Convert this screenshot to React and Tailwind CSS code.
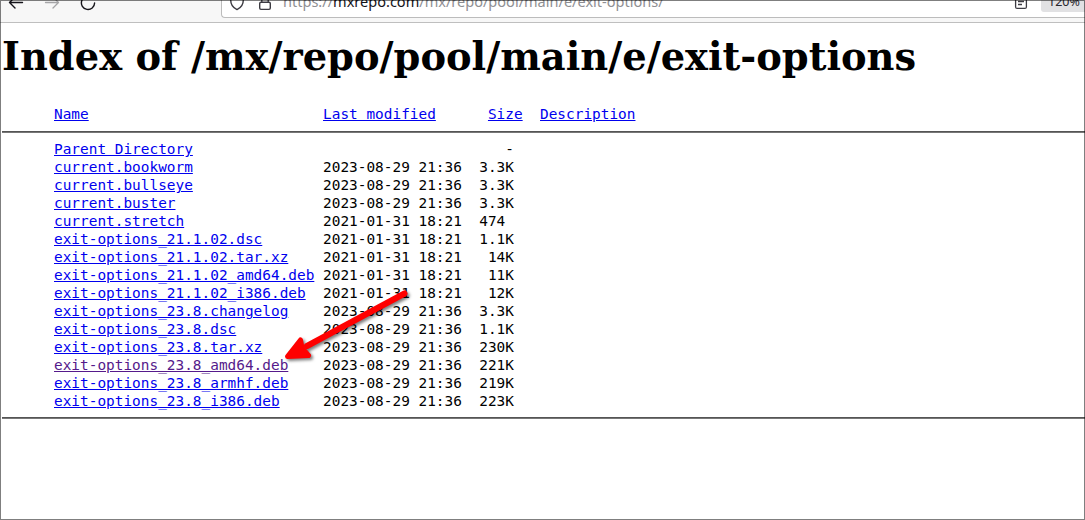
const D23 = '2023-08-29 21:36';
const D21 = '2021-01-31 18:21';

const rows = [
  ['Parent Directory', '', '   -'],
  ['current.bookworm', D23, '3.3K'],
  ['current.bullseye', D23, '3.3K'],
  ['current.buster', D23, '3.3K'],
  ['current.stretch', D21, '474 '],
  ['exit-options_21.1.02.dsc', D21, '1.1K'],
  ['exit-options_21.1.02.tar.xz', D21, ' 14K'],
  ['exit-options_21.1.02_amd64.deb', D21, ' 11K'],
  ['exit-options_21.1.02_i386.deb', D21, ' 12K'],
  ['exit-options_23.8.changelog', D23, '3.3K'],
  ['exit-options_23.8.dsc', D23, '1.1K'],
  ['exit-options_23.8.tar.xz', D23, '230K'],
  ['exit-options_23.8_amd64.deb', D23, '221K', true],
  ['exit-options_23.8_armhf.deb', D23, '219K'],
  ['exit-options_23.8_i386.deb', D23, '223K'],
];

function Link({ children, visited }) {
  return (
    <a href="#" className={visited ? 'text-[#551a8b] underline' : 'text-[#0000ee] underline'}>
      {children}
    </a>
  );
}

function Toolbar() {
  return (
    <header className="flex h-[23px] shrink-0 items-start overflow-hidden border-b border-[#bfbfbf] bg-[#f7f7f7]">
      <svg className="h-[22px] w-[221px] shrink-0" viewBox="0 0 221 22" fill="none" strokeLinecap="round" strokeLinejoin="round">
        <path d="M22.5 2.5H9.5M15 -3L9.5 2.5L15 8" stroke="#15141a" strokeWidth="1.4" />
        <path d="M45.5 2.5H58.5M53 -3L58.5 2.5L53 8" stroke="#a5a5a7" strokeWidth="1.3" />
        <path d="M94.6 3A6.6 6.6 0 1 1 91 -3" stroke="#15141a" strokeWidth="1.4" />
      </svg>
      <div className="flex h-[18px] flex-1 items-start overflow-hidden rounded-bl-[4px] border-b border-l border-[#bcbcbc] bg-white">
        <svg className="h-[17px] w-[61px] shrink-0" viewBox="222 0 61 17" fill="none" stroke="#3c3b42" strokeWidth="1.4" strokeLinejoin="round">
          <path d="M230.7 -3V0C230.7 5 233.5 8 237 9.6C240.5 8 243.3 5 243.3 0V-3" />
          <rect x="259.7" y="2.2" width="10.6" height="7.2" rx="1.3" />
          <path d="M261.8 2V-1M268.2 2V-1" />
        </svg>
        <div className="-mt-[9px] w-[731px] shrink-0 whitespace-pre font-['Noto_Sans'] text-[14.54px] leading-[20px] text-[#8f8f93]">
          https://<span className="text-[#15141a]">mxrepo.com</span>/mx/repo/pool/main/e/exit-options/
        </div>
        <svg className="h-[17px] w-[27px] shrink-0" viewBox="1014 0 27 17" fill="none" stroke="#3c3b42" strokeWidth="1.3">
          <rect x="1015.6" y="-4" width="10.8" height="12.4" rx="1.5" />
          <path d="M1018 1.5H1024M1018 4.5H1022" />
        </svg>
        <div className="h-[12px] w-[50px] shrink-0 overflow-hidden rounded-b-[3px] bg-[#e1e1e3] pl-[7px]">
          <div className="-mt-[8px] font-['Noto_Sans'] text-[12.5px] leading-[20px] text-[#28272e]">120%</div>
        </div>
      </div>
    </header>
  );
}

function Rule() {
  return <div className="h-[2px] border-t border-b border-t-[#555555] border-b-[#777777]" />;
}

export default function App() {
  return (
    <div className="relative flex h-[520px] w-[1085px] flex-col overflow-hidden bg-white text-black">
      <Toolbar />
      <main className="pl-[2px]">
        <h1 className="mt-[11px] h-[45px] whitespace-nowrap font-['DejaVu_Serif'] text-[38.4px] leading-[45px] font-bold">
          Index of /mx/repo/pool/main/e/exit-options
        </h1>
        <div className="mt-[26px] h-[18px] whitespace-pre pl-[52px] font-['DejaVu_Sans_Mono'] text-[14.4px] leading-[18px] tracking-[0.014px]">
          <Link>Name</Link>{' '.repeat(27)}<Link>Last modified</Link>{' '.repeat(6)}<Link>Size</Link>{'  '}<Link>Description</Link>
        </div>
        <div className="mt-[8px]"><Rule /></div>
        <div className="mt-[7px] whitespace-pre pl-[52px] font-['DejaVu_Sans_Mono'] text-[14.4px] leading-[18px] tracking-[0.014px]">
          {rows.map(([name, date, size, visited]) => (
            <div key={name} className="h-[18px]">
              <Link visited={visited}>{name}</Link>
              {' '.repeat(31 - name.length)}{date.padEnd(18)}{size}
            </div>
          ))}
        </div>
        <div className="mt-[7px]"><Rule /></div>
      </main>
      <svg className="absolute top-[280px] left-[275px] h-[95px] w-[145px] drop-shadow-[2px_2px_1.5px_rgba(0,0,0,0.5)]" viewBox="275 280 145 95">
        <path d="M404.500 293.500L307 346" stroke="#ff0000" strokeWidth="6" strokeLinecap="round" />
        <path d="M287.500 356.500L300.500 340L302 348L308.500 355.500Z" fill="#ff0000" stroke="#ff0000" strokeWidth="5" strokeLinejoin="round" />
      </svg>
      <div className="pointer-events-none absolute inset-0 border border-black/50" />
    </div>
  );
}
